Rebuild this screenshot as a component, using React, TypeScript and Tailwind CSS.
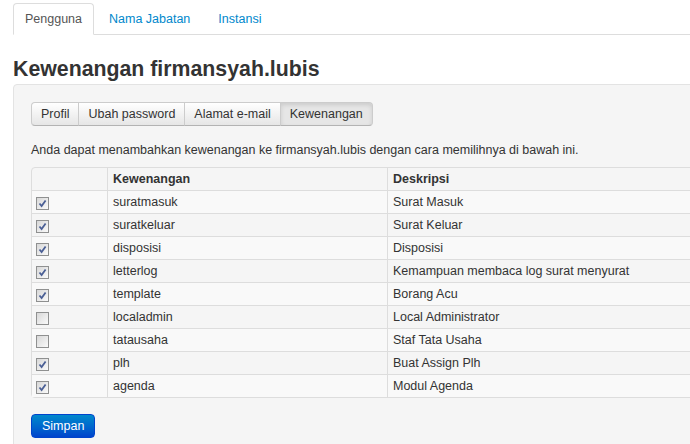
import React from 'react';

interface PermRow {
  name: string;
  desc: string;
  checked: boolean;
}

const rows: PermRow[] = [
  { name: 'suratmasuk', desc: 'Surat Masuk', checked: true },
  { name: 'suratkeluar', desc: 'Surat Keluar', checked: true },
  { name: 'disposisi', desc: 'Disposisi', checked: true },
  { name: 'letterlog', desc: 'Kemampuan membaca log surat menyurat', checked: true },
  { name: 'template', desc: 'Borang Acu', checked: true },
  { name: 'localadmin', desc: 'Local Administrator', checked: false },
  { name: 'tatausaha', desc: 'Staf Tata Usaha', checked: false },
  { name: 'plh', desc: 'Buat Assign Plh', checked: true },
  { name: 'agenda', desc: 'Modul Agenda', checked: true },
];

// old-windows looking checkbox
function Check({ on }: { on: boolean }) {
  return (
    <span className="flex h-[13px] w-[13px] items-center justify-center border border-[#8f9090] bg-gradient-to-br from-[#d8d8d8] to-[#fafafa]">
      {on && (
        <svg width="11" height="11" viewBox="0 0 11 11">
          <path d="M2.5 5.5 L4.6 8 L8.6 2.4" fill="none" stroke="#4a5f95" strokeWidth="1.8" />
        </svg>
      )}
    </span>
  );
}

const subTabs = ['Profil', 'Ubah password', 'Alamat e-mail', 'Kewenangan'];

export default function App() {
  return (
    <div className="h-[444px] w-[690px] overflow-hidden bg-white font-['Liberation_Sans',Arial,sans-serif] text-[12.5px] text-[#333]">
      <div className="w-[760px] pl-[13px]">
        {/* top tabs ---------------------------------------------------- */}
        <ul className="mt-[3px] flex border-b border-[#ddd]">
          <li className="-mb-px mr-[2px] h-[32px] rounded-t-[4px] border border-[#ddd] border-b-white bg-white px-[11px] leading-[30px] text-[#555]">
            Pengguna
          </li>
          <li className="mr-[2px] h-[31px] border border-transparent px-[12px] leading-[30px] text-[#0088cc]">
            Nama Jabatan
          </li>
          <li className="mr-[2px] h-[31px] border border-transparent px-[12px] leading-[30px] text-[#0088cc]">
            Instansi
          </li>
        </ul>

        <h1 className="mt-[20px] h-[28px] text-[21.3px] font-bold leading-[28px] text-[#333]">
          Kewenangan firmansyah.lubis
        </h1>

        {/* well ------------------------------------------------------------ */}
        <div className="mt-[1px] h-[400px] rounded-[4px] border border-[#e3e3e3] bg-[#f5f5f5] pl-[17px] pt-[17px]">
          <div className="flex h-[24px]">
            {subTabs.map((t, i) => {
              const active = i === subTabs.length - 1;
              return (
                <span
                  key={t}
                  className={
                    (i > 0 ? '-ml-px ' : '') +
                    (i === 0 ? 'rounded-l-[4px] ' : '') +
                    (active
                      ? 'rounded-r-[4px] bg-[#e6e6e6] shadow-[inset_0_2px_4px_rgba(0,0,0,0.12)] '
                      : 'bg-gradient-to-b from-white to-[#e6e6e6] ') +
                    'border border-[#ccc] border-b-[#b3b3b3] px-[9px] leading-[22px] text-[#333]'
                  }
                >
                  {t}
                </span>
              );
            })}
          </div>

          <p className="mt-[15px] leading-[18px]">
            Anda dapat menambahkan kewenangan ke firmansyah.lubis dengan cara memilihnya di bawah ini.
          </p>

          {/* table -------------------------------------------------------- */}
          <div className="mt-[8px] rounded-[4px] border border-[#ddd]">
            <div className="flex h-[22px] font-bold leading-[22px]">
              <div className="w-[75px]" />
              <div className="w-[280px] border-l border-[#ddd] pl-[5px]">Kewenangan</div>
              <div className="flex-1 border-l border-[#ddd] pl-[5px]">Deskripsi</div>
            </div>
            {rows.map((r, i) => (
              <div
                key={r.name}
                className={
                  'flex h-[23px] border-t border-[#ddd] leading-[22px] ' +
                  (i % 2 === 0 ? 'bg-[#f9f9f9]' : '')
                }
              >
                <div className="w-[75px] pl-[4px] pt-[6px]">
                  <Check on={r.checked} />
                </div>
                <div className="w-[280px] border-l border-[#ddd] pl-[5px]">{r.name}</div>
                <div className="flex-1 border-l border-[#ddd] pl-[5px]">{r.desc}</div>
              </div>
            ))}
          </div>

          <button className="mt-[16px] h-[24px] rounded-[4px] border border-[#0044cc] bg-gradient-to-b from-[#0088cc] to-[#0044cc] px-[10px] leading-[22px] text-white">
            Simpan
          </button>
        </div>
      </div>
    </div>
  );
}
